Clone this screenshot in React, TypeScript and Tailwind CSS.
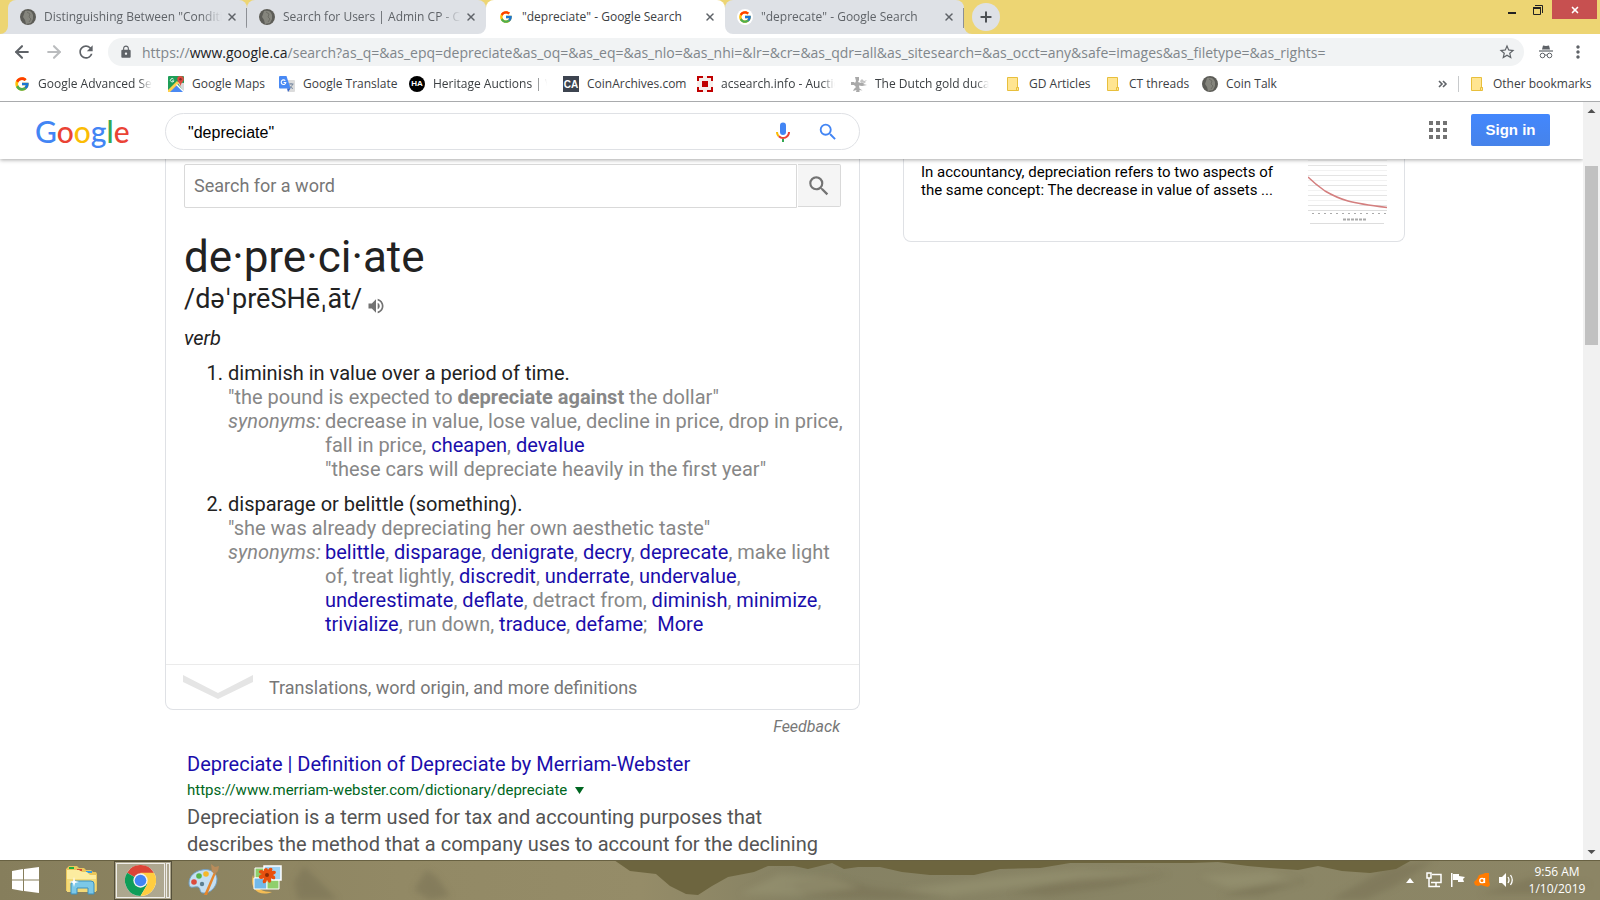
import type { ReactNode } from 'react';
import { ArrowLeft, ArrowRight, Plus, X } from 'lucide-react';
import { FcGoogle } from 'react-icons/fc';
import { MdLock, MdMoreVert, MdOutlineStarBorder, MdRefresh, MdSearch, MdVolumeUp } from 'react-icons/md';

function CoinIcon() {
  return (
    <svg viewBox="0 0 16 16" className="w-4 h-4">
      <circle cx="8" cy="8" r="8" fill="#5c5c57" />
      <path d="M5 2c4-1 7 0 8 4v4l-2 4-5 1-1-4-2-3z" fill="#85857d" />
      <path d="M7 3l3 2-1 3 2 2-2 3" stroke="#6c6c65" strokeWidth="1" fill="none" />
    </svg>
  );
}

function FolderIcon() {
  return (
    <svg viewBox="0 0 16 16" className="w-4 h-4">
      <path d="M2.500 1.500h10v10h1v3h-11z" fill="#ffe591" stroke="#e8bf3c" />
      <path d="M11.500 14.500v-3h2" fill="none" stroke="#e8bf3c" />
    </svg>
  );
}

function MapsIcon() {
  return (
    <svg viewBox="0 0 16 16" className="w-4 h-4">
      <rect width="16" height="16" rx="1" fill="#1e9e58" />
      <path d="M8 8l8 8H1z" fill="#4a89f3" />
      <path d="M9 6l7 1v9z" fill="#dadada" />
      <path d="M0 14L9 5l2 2-9 9H0z" fill="#ffd04c" />
      <path d="M8 9l1-1 7 7v1h-1z" fill="#fff" />
      <path d="M12.500 0a3.300 3.300 0 0 1 3.300 3.300c0 2.500-2.800 3.200-3.300 7.200-.5-4-3.300-4.700-3.300-7.200A3.300 3.300 0 0 1 12.500 0z" fill="#dd4b3e" />
      <circle cx="12.500" cy="3.300" r="1.200" fill="#822f2b" />
      <path d="M5.500 3.200A1.700 1.700 0 1 0 5.800 4.800H4.200" fill="none" stroke="#fff" strokeWidth=".9" />
    </svg>
  );
}

function TranslateIcon() {
  return (
    <svg viewBox="0 0 16 16" className="w-4 h-4">
      <path d="M7 4h8a1 1 0 0 1 1 1v10a1 1 0 0 1-1 1H9z" fill="#dcdcdc" />
      <path d="M9.500 8h5M12 7v1.200M13.600 8c-.4 2-2 3.500-3.600 4.500M10.500 9.500c.8 1.500 2 2.500 3.500 3" fill="none" stroke="#7889a0" />
      <path d="M1 0h6.500l4 12.500H1a1 1 0 0 1-1-1V1a1 1 0 0 1 1-1z" fill="#4889f4" />
      <path d="M8 12.500h3.500L9 16z" fill="#3564c8" />
      <path d="M6.300 4.700A2.300 2.300 0 1 0 6.800 6.500H4.600" fill="none" stroke="#fff" strokeWidth="1.100" />
    </svg>
  );
}

function HeritageIcon() {
  return (
    <span className="w-4 h-4 rounded-full bg-black text-white flex items-center justify-center font-['Liberation_Sans'] font-bold text-[8px]">
      HA
    </span>
  );
}

function CoinArchivesIcon() {
  return (
    <span className="w-4 h-4 bg-[#3d4450] text-white flex items-center justify-center font-['Liberation_Sans'] font-bold text-[10px]">
      CA
    </span>
  );
}

function AcSearchIcon() {
  return (
    <svg viewBox="0 0 16 16" className="w-4 h-4">
      <rect width="16" height="16" fill="#f6efec" />
      <path d="M1 5V1h5M10 1h5v4M15 11v4h-5M6 15H1v-4" fill="none" stroke="#c00000" strokeWidth="2" />
      <rect x="5" y="5" width="6" height="6" fill="#c00000" />
    </svg>
  );
}

function DucatIcon() {
  return (
    <svg viewBox="0 0 16 16" className="w-4 h-4" fill="#a9a9a9">
      <path d="M4 1h4v3l-1 2 3 1 5-1-3 2 4 1-5 1-3-.5.5 3 3 2-3-.5V16H5l.5-2L2 15l1-2 2-2-2-2H0V6h3l1 1 1-2z" />
      <path d="M9 5l2-2 2 2 3-1-2 2-4 1z" fill="#c4c4c4" />
    </svg>
  );
}

const tabs = [
  { title: 'Distinguishing Between "Conditional', icon: 'coin', active: false, divider: true },
  { title: 'Search for Users | Admin CP - Coin T', icon: 'coin', active: false, divider: false },
  { title: '"depreciate" - Google Search', icon: 'google', active: true, divider: false },
  { title: '"deprecate" - Google Search', icon: 'google', active: false, divider: true },
];

const bookmarks: { label: string; icon: ReactNode; width: string; fade?: boolean }[] = [
  { label: 'Google Advanced Search', icon: <FcGoogle className="w-4 h-4" />, width: 'w-[114px]', fade: true },
  { label: 'Google Maps', icon: <MapsIcon />, width: 'w-[71px]' },
  { label: 'Google Translate', icon: <TranslateIcon />, width: 'w-[90px]' },
  { label: 'Heritage Auctions | World', icon: <HeritageIcon />, width: 'w-[114px]', fade: true },
  { label: 'CoinArchives.com', icon: <CoinArchivesIcon />, width: 'w-[94px]' },
  { label: 'acsearch.info - Auction', icon: <AcSearchIcon />, width: 'w-[114px]', fade: true },
  { label: 'The Dutch gold ducats', icon: <DucatIcon />, width: 'w-[114px]', fade: true },
  { label: 'GD Articles', icon: <FolderIcon />, width: 'w-[60px]' },
  { label: 'CT threads', icon: <FolderIcon />, width: 'w-[57px]' },
  { label: 'Coin Talk', icon: <CoinIcon />, width: 'w-[52px]' },
];

const fadeMask = '[mask-image:linear-gradient(to_right,#000_88%,transparent)]';

function Flare({ className }: { className: string }) {
  return (
    <svg viewBox="0 0 8 8" className={`absolute bottom-0 w-2 h-2 ${className}`}>
      <path d="M8 0v8H0a8 8 0 0 0 8-8z" fill="currentColor" />
    </svg>
  );
}

function TabStrip() {
  return (
    <div className="flex justify-between h-[34px] bg-[#edd573] pl-2 pr-[3px]">
      <div className="flex">
        {tabs.map((tab, idx) => (
          <div
            key={idx}
            className={`relative w-[239px] h-full rounded-t-lg flex items-center pl-3 pr-2 ${
              tab.active ? 'bg-white text-white z-10' : 'bg-[#dee1e6] text-[#dee1e6]'
            }`}
          >
            <Flare className="-left-2" />
            <Flare className="-right-2 -scale-x-100" />
            <span className="w-4 h-4 flex items-center justify-center rounded-full bg-white">
              {tab.icon === 'coin' ? <CoinIcon /> : <FcGoogle className="w-[14px] h-[14px]" />}
            </span>
            <button
              className={`ml-2 w-[178px] text-left whitespace-nowrap overflow-hidden text-[12px] ${
                tab.active ? 'text-[#3c4043]' : `text-[#5f6368] ${fadeMask}`
              }`}
            >
              {tab.title}
            </button>
            <button aria-label="Close tab" className="ml-1 text-[#5f6368]">
              <X className="w-3 h-3" strokeWidth={3} />
            </button>
            {tab.divider && <span className="absolute right-0 top-2 w-px h-5 bg-[#8d9095]" />}
          </div>
        ))}
        <button
          aria-label="New tab"
          className="ml-2 mt-[3px] w-7 h-7 rounded-full bg-[#dee1e6] text-[#4c5054] flex items-center justify-center"
        >
          <Plus className="w-4 h-4" strokeWidth={3} />
        </button>
      </div>
      <div className="flex h-[19px]">
        <button aria-label="Minimize" className="w-6 flex items-center justify-center">
          <svg viewBox="0 0 12 12" className="w-3 h-3">
            <path d="M2 8h8v2H2z" fill="#222" />
          </svg>
        </button>
        <button aria-label="Restore" className="w-7 flex items-center justify-center">
          <svg viewBox="0 0 12 12" className="w-3 h-3" fill="none" stroke="#222">
            <path d="M3 1.500h7.500V9" />
            <path d="M1.500 3.500h7v7h-7z" />
            <path d="M1 4h8" strokeWidth="2" />
          </svg>
        </button>
        <button aria-label="Close" className="w-[45px] bg-[#c75050] text-white flex items-center justify-center">
          <X className="w-[10px] h-[10px]" strokeWidth={4} />
        </button>
      </div>
    </div>
  );
}

function Toolbar() {
  return (
    <div className="flex items-center h-9 bg-white pl-3 pr-3 text-[#5f6368]">
      <button aria-label="Back" className="w-8">
        <ArrowLeft className="w-5 h-5" strokeWidth={2.5} />
      </button>
      <button aria-label="Forward" className="w-8 text-[#babcbe]">
        <ArrowRight className="w-5 h-5" strokeWidth={2.5} />
      </button>
      <button aria-label="Reload" className="w-8">
        <MdRefresh className="w-5 h-5" />
      </button>
      <div className="flex-1 flex items-center h-7 rounded-full bg-[#f1f3f4] pl-[11px] pr-2">
        <MdLock className="w-[14px] h-[14px]" />
        <div className="ml-[9px] flex-1 text-[14px] whitespace-nowrap overflow-hidden text-[#80868b]">
          https://<span className="text-[#202124]">www.google.ca</span>
          /search?as_q=&amp;as_epq=depreciate&amp;as_oq=&amp;as_eq=&amp;as_nlo=&amp;as_nhi=&amp;lr=&amp;cr=&amp;as_qdr=all&amp;as_sitesearch=&amp;as_occt=any&amp;safe=images&amp;as_filetype=&amp;as_rights=
        </div>
        <button aria-label="Bookmark this page">
          <MdOutlineStarBorder className="w-[18px] h-[18px]" />
        </button>
      </div>
      <svg viewBox="0 0 16 16" className="w-4 h-4 ml-[14px]">
        <path d="M5 1.500l3 .5 3-.5 1 4H4z" fill="#5f6368" />
        <path d="M1 7h14" stroke="#5f6368" strokeWidth="1.200" />
        <circle cx="4.500" cy="11.500" r="2.300" fill="none" stroke="#5f6368" />
        <circle cx="11.500" cy="11.500" r="2.300" fill="none" stroke="#5f6368" />
        <path d="M6.800 11.300q1.200-.8 2.400 0" fill="none" stroke="#5f6368" />
      </svg>
      <button aria-label="Menu" className="ml-[14px]">
        <MdMoreVert className="w-5 h-5" />
      </button>
    </div>
  );
}

function BookmarksBar() {
  return (
    <div className="flex items-center justify-between h-8 bg-white border-b border-[#a9abad] pl-[14px] pr-[14px] pb-[3px] text-[12px] text-[#3c4043]">
      <div className="flex items-center gap-4">
        {bookmarks.map((item) => (
          <a key={item.label} href="#" className="flex items-center gap-2">
            {item.icon}
            <span className={`whitespace-nowrap ${item.width} ${item.fade ? `overflow-hidden ${fadeMask}` : ''}`}>
              {item.label}
            </span>
          </a>
        ))}
      </div>
      <div className="flex items-center">
        <button aria-label="More bookmarks" className="text-[#5f6368]">
          <svg viewBox="0 0 10 8" className="w-[10px] h-2" fill="none" stroke="currentColor" strokeWidth="1.600">
            <path d="M1 1l3 3-3 3M5 1l3 3-3 3" />
          </svg>
        </button>
        <span className="ml-[10px] w-px h-4 bg-[#c8cacc]" />
        <a href="#" className="ml-[10px] flex items-center gap-2">
          <FolderIcon />
          <span className="whitespace-nowrap w-[93px]">Other bookmarks</span>
        </a>
      </div>
    </div>
  );
}

function GoogleHeader() {
  return (
    <header className="relative z-10 shrink-0 flex items-center h-[57px] bg-white shadow-[0_1px_4px_rgba(0,0,0,0.35)] pl-[35px] pr-[33px]">
      <a href="#" aria-label="Google" className="w-[130px] font-['Lato'] font-medium text-[30px] leading-none">
        <span className="text-[#4285f4]">G</span>
        <span className="text-[#ea4335]">o</span>
        <span className="text-[#fbbc05]">o</span>
        <span className="text-[#4285f4]">g</span>
        <span className="text-[#34a853]">l</span>
        <span className="text-[#ea4335]">e</span>
      </a>
      <form className="mt-[2px] flex items-center w-full max-w-[695px] h-[37px] border border-[#dfe1e5] rounded-full pl-[22px] pr-5">
        <input
          aria-label="Search"
          defaultValue={'"depreciate"'}
          className="flex-1 pt-[2px] font-['Liberation_Sans'] text-[16px] text-black outline-none"
        />
        <button type="button" aria-label="Search by voice">
          <svg viewBox="0 0 24 24" className="w-6 h-6">
            <path d="M12 15a3 3 0 0 0 3-3V5.500a3 3 0 0 0-6 0V12a3 3 0 0 0 3 3z" fill="#4285f4" />
            <path d="M11 18.900h2V22h-2z" fill="#34a853" />
            <path d="M7 12H5c0 2 .8 3.700 2.100 5l1.400-1.400A5 5 0 0 1 7 12z" fill="#fbbc05" />
            <path d="M12 17.100c-1.400 0-2.600-.6-3.500-1.500L7.100 17A7 7 0 0 0 12 19c3.900 0 7-3.100 7-7h-2c0 2.800-2.200 5.100-5 5.100z" fill="#ea4335" />
          </svg>
        </button>
        <button type="button" aria-label="Google Search" className="ml-[22px]">
          <MdSearch className="w-[22px] h-[22px] text-[#4285f4]" />
        </button>
      </form>
      <div className="ml-auto flex items-center pb-px">
        <button aria-label="Google apps">
          <svg viewBox="0 0 18 18" className="w-[18px] h-[18px]" fill="#737373">
            <path d="M0 0h4v4H0zM7 0h4v4H7zM14 0h4v4h-4zM0 7h4v4H0zM7 7h4v4H7zM14 7h4v4h-4zM0 14h4v4H0zM7 14h4v4H7zM14 14h4v4h-4z" />
          </svg>
        </button>
        <a
          href="#"
          className="ml-6 w-[79px] h-8 rounded-xs bg-linear-to-b from-[#4387fd] to-[#4683ea] text-white font-['Liberation_Sans'] font-bold text-[15px] flex items-center justify-center"
        >
          Sign in
        </a>
      </div>
    </header>
  );
}

// Words in `linked` have their own entry, the rest are plain text
function Synonyms({ words, linked, more }: { words: string[]; linked: string[]; more?: boolean }) {
  return (
    <>
      {words.map((word, idx) => (
        <span key={word}>
          {linked.includes(word) ? (
            <a href="#" className="text-[#1a0dab]">
              {word}
            </a>
          ) : (
            word
          )}
          {idx < words.length - 1 && ', '}
        </span>
      ))}
      {more && (
        <>
          ;&nbsp;{' '}
          <a href="#" className="text-[#1a0dab]">
            More
          </a>
        </>
      )}
    </>
  );
}

function DictionaryCard() {
  return (
    <section className="border border-t-0 border-[#dfe1e5] rounded-b-lg">
      <div className="pl-[18px] pr-2 pt-[5px] pb-7 text-[20px] leading-6 text-[#222]">
        <form className="mr-[10px] flex items-start">
          <input
            aria-label="Search for a word"
            placeholder="Search for a word"
            className="flex-1 h-11 border border-[#d9d9d9] rounded-l-xs px-[9px] pb-[2px] text-[18px] placeholder:text-[#777] outline-none"
          />
          <button
            type="button"
            aria-label="Look up"
            className="ml-px w-[43px] h-[43px] bg-[#f5f5f5] border border-l-0 border-[#d9d9d9] rounded-r-xs flex items-center justify-center"
          >
            <MdSearch className="w-[26px] h-[26px] text-[#737373]" />
          </button>
        </form>

        <h2 className="mt-6 text-[44px] leading-[50px]">de·pre·ci·ate</h2>
        <div className="flex items-end">
          <span className="text-[27px] leading-[34px]">
            /də<span className="font-['DejaVu_Sans']">ˈ</span>prēSHē<span className="font-['DejaVu_Sans']">ˌ</span>āt/
          </span>
          <button aria-label="Listen" className="ml-1 text-[#737373]">
            <MdVolumeUp className="w-5 h-5" />
          </button>
        </div>
        <div className="mt-[10px] italic">verb</div>

        <ol className="mt-[11px] list-decimal pl-11">
          <li>
            <div>diminish in value over a period of time.</div>
            <div className="text-[#878787]">
              "the pound is expected to <b>depreciate against</b> the dollar"
            </div>
            <div className="flex text-[#878787]">
              <span className="w-[97px] shrink-0 italic">synonyms:</span>
              <div>
                <Synonyms
                  words={['decrease in value', 'lose value', 'decline in price', 'drop in price', 'fall in price', 'cheapen', 'devalue']}
                  linked={['cheapen', 'devalue']}
                />
                <div>"these cars will depreciate heavily in the first year"</div>
              </div>
            </div>
          </li>
          <li className="mt-[11px]">
            <div>disparage or belittle (something).</div>
            <div className="text-[#878787]">"she was already depreciating her own aesthetic taste"</div>
            <div className="flex text-[#878787]">
              <span className="w-[97px] shrink-0 italic">synonyms:</span>
              <div>
                <Synonyms
                  words={[
                    'belittle', 'disparage', 'denigrate', 'decry', 'deprecate', 'make light of', 'treat lightly',
                    'discredit', 'underrate', 'undervalue', 'underestimate', 'deflate', 'detract from', 'diminish',
                    'minimize', 'trivialize', 'run down', 'traduce', 'defame',
                  ]}
                  linked={[
                    'belittle', 'disparage', 'denigrate', 'decry', 'deprecate', 'discredit', 'underrate', 'undervalue',
                    'underestimate', 'deflate', 'diminish', 'minimize', 'trivialize', 'traduce', 'defame',
                  ]}
                  more
                />
              </div>
            </div>
          </li>
        </ol>
      </div>

      <button className="w-full h-[45px] border-t border-[#ebebeb] pl-[17px] flex items-center text-[18px] text-[#777]">
        <svg viewBox="0 0 70 24" className="w-[70px] h-6">
          <path d="M0 0l35 18L70 0v7L35 24 0 7z" fill="#e5e5e5" />
        </svg>
        <span className="ml-4">Translations, word origin, and more definitions</span>
      </button>
    </section>
  );
}

function SearchResult() {
  return (
    <article className="mt-[15px] ml-[22px] mr-9">
      <h3 className="text-[20px] leading-6">
        <a href="#" className="text-[#1a0dab]">
          Depreciate | Definition of Depreciate by Merriam-Webster
        </a>
      </h3>
      <div className="mt-[2px] flex items-center gap-2 text-[15px] leading-6 text-[#006621]">
        <cite className="not-italic">https://www.merriam-webster.com/dictionary/depreciate</cite>
        <svg viewBox="0 0 9 7" className="w-[9px] h-[7px]">
          <path d="M0 0h9L4.500 7z" fill="#006621" />
        </svg>
      </div>
      <p className="mt-[2px] text-[20px] leading-[27px] text-[#545454]">
        Depreciation is a term used for tax and accounting purposes that describes the method that a company uses to
        account for the declining
      </p>
    </article>
  );
}

function AccountancyCard() {
  return (
    <aside className="w-full max-w-[502px] h-[83px] border border-t-0 border-[#dfe1e5] rounded-b-lg flex justify-between pl-[17px] pr-[17px] overflow-hidden">
      <p className="w-[360px] mt-1 text-[15px] leading-[18px] text-black">
        In accountancy, depreciation refers to two aspects of the same concept: The decrease in value of assets ...
      </p>
      <svg viewBox="0 0 79 66" className="w-[79px] h-[66px] shrink-0">
        <path d="M0 6.500h79M0 16.500h79M0 26.500h79M0 36.500h79M0 46.500h79" stroke="#e4e4e4" />
        <path d="M0 1.500h79M0 11.500h79M0 21.500h79M0 31.500h79M0 41.500h79" stroke="#f2f2f2" />
        <path d="M0 51.500h79" stroke="#ddd" />
        <path d="M0 18Q7 25 17 32q12 7 23 10t39 6.500" fill="none" stroke="#d47f7f" strokeWidth="1.500" />
        <path d="M4 54.500h75" stroke="#aaa" strokeDasharray="2 4" />
        <path d="M35 60.500h24" stroke="#aaa" strokeWidth="2" strokeDasharray="3 1" />
        <path d="M2 64.500h74" stroke="#ddd" />
      </svg>
    </aside>
  );
}

function Scrollbar() {
  return (
    <div className="w-[17px] shrink-0 bg-[#f1f1f1] flex flex-col items-center">
      <svg viewBox="0 0 17 17" className="w-[17px] h-[17px]">
        <path d="M8.500 7l4 4h-8z" fill="#505050" />
      </svg>
      <div className="mt-[47px] w-[13px] h-[179px] bg-[#c1c1c1]" />
      <svg viewBox="0 0 17 17" className="mt-auto w-[17px] h-[17px]">
        <path d="M8.500 11l4-4h-8z" fill="#505050" />
      </svg>
    </div>
  );
}

function TaskbarBackdrop() {
  return (
    <svg viewBox="0 0 1600 40" preserveAspectRatio="none" className="absolute inset-0 w-full h-full">
      <defs>
        <linearGradient id="snow" x1="0" x2="1" y1="0" y2="0">
          <stop offset="0" stopColor="#867e5c" />
          <stop offset="0.25" stopColor="#928965" />
          <stop offset="0.4" stopColor="#958c68" />
          <stop offset="0.5" stopColor="#858163" />
          <stop offset="0.8" stopColor="#8b8666" />
          <stop offset="1" stopColor="#8c8565" />
        </linearGradient>
        <filter id="soft" x="-20%" y="-20%" width="140%" height="140%">
          <feGaussianBlur stdDeviation="3" />
        </filter>
      </defs>
      <rect width="1600" height="40" fill="url(#snow)" />
      <g filter="url(#soft)" fill="#777052" opacity=".5">
        <path d="M298 40l-4-18 10-16 14 14 20 20zM414 30l12-20 10 6 14 20-20 4z" />
        <path d="M1330 40l60-34 45-6-40 26-30 14zM1480 34l50-16 60 6-40 10z" />
        <path d="M790 24l36-8 50 12 70 8-60 4-80-4zM1010 34l70-18 90-2-60 14-60 8zM1220 36l60-18 30 2-50 16z" />
      </g>
      <g filter="url(#soft)" fill="#9a9674" opacity=".5">
        <path d="M740 34l40-20 50 2 30 12-60 8zM900 30l90-12 90-8 80 4-120 10-90 12zM1200 16l70-4 30 10-70 6z" />
      </g>
      <path
        d="M614 0l16 11 26 3 14 12 16 8 12 1 14-9 16-9 26-5 14-6 26 0 14 3 24-6 12 6 14-2 22 0 22 5 28 3 44 0 26-6 40-1 30-5 60 0 60 0 28-1 30 4 22 2 28 2 20-4 24 5 28 2 26-4 16-9z"
        fill="#6d653f"
      />
      <rect width="1600" height="1" fill="#686142" />
    </svg>
  );
}

function Taskbar() {
  return (
    <footer className="relative shrink-0 h-10 bg-[#8c8461]">
      <TaskbarBackdrop />
      <div className="relative h-full flex items-center pl-2 pr-4">
        <button aria-label="Start" className="w-[34px] flex justify-center">
          <svg viewBox="0 0 27 26" className="w-[27px] h-[26px]" fill="#fff">
            <path d="M0 4l11-2v10.500H0zM12 2l15-2v12.500H12zM0 13.500h11V24L0 22zM12 13.500h15V26l-15-2z" />
          </svg>
        </button>
        <button aria-label="File Explorer" className="ml-6">
          <svg viewBox="0 0 32 30" className="w-8 h-[30px]">
            <path d="M1 3l2-2h8l2 2h5l2 2h5l2 2h3l1 2v17H0V4z" fill="#eac75c" />
            <path d="M3 2h5v2H3z" fill="#1fae3d" />
            <path d="M11 4h5v2h-5z" fill="#d54b32" />
            <path d="M20 6h6v2h-6z" fill="#3a9de0" />
            <path d="M1 5h12l3 2h5l3 3h6v17H1z" fill="#fcecA0" />
            <path d="M1 14h29v13H1z" fill="#f2d978" />
            <path d="M5 29V19q0-3 3-3h17q3 0 3 3v10h-6v-6H11v6z" fill="#7cc8e8" stroke="#3c90bd" />
            <path d="M8 12l1 4 4 1-4 1-1 4-1-4-4-1 4-1z" fill="#fff" />
          </svg>
        </button>
        <button
          aria-label="Google Chrome"
          className="ml-4 w-[58px] h-[39px] border border-[#55503a] bg-white/30 flex p-px"
        >
          <span className="flex-1 h-full border border-white/80 flex items-center justify-center">
            <svg viewBox="0 0 32 32" className="w-[31px] h-[31px]">
              <circle cx="16" cy="16" r="16" fill="#fff" />
              <path d="M16 16L2.140 8A16 16 0 0 1 29.860 8z" fill="#db4437" />
              <path d="M16 16L2.140 8A16 16 0 0 0 16 32l7-12z" fill="#0f9d58" />
              <path d="M16 16l7 4-7 12A16 16 0 0 0 29.860 8H16z" fill="#ffcd40" />
              <circle cx="16" cy="16" r="7.400" fill="#f1f1f1" />
              <circle cx="16" cy="16" r="6" fill="#4285f4" />
            </svg>
          </span>
          <span className="ml-px w-1 h-full border border-white/80" />
        </button>
        <button aria-label="Paint" className="ml-4">
          <svg viewBox="0 0 32 32" className="w-8 h-8">
            <path d="M14 6C22 4 29 9 29 15c0 8-7 15-14 14-4-.5-2-5-5-6-4-1-9 3-9-4C1 12 7 7 14 6z" fill="#c5dff2" stroke="#719fc4" />
            <circle cx="6" cy="18" r="2.800" fill="#dc4a3c" />
            <circle cx="11" cy="12" r="2.800" fill="#55b44a" />
            <circle cx="18" cy="10" r="2.800" fill="#f5b829" />
            <circle cx="14" cy="20" r="2.200" fill="#5d7f91" />
            <path d="M26 8l2 1-9 22h-3z" fill="#e5862d" />
            <path d="M23 0l4 3 4-1-1 5-3 3-3-2z" fill="#b98c5b" />
          </svg>
        </button>
        <button aria-label="Photo Gallery" className="ml-[31px]">
          <svg viewBox="0 0 32 30" className="w-8 h-[30px]">
            <path d="M2 10C-2 24 8 32 21 27 12 27 6 24 4 18z" fill="#f4bd55" />
            <path d="M4 3h12v10H4z" fill="#8fcf6c" stroke="#fff" />
            <path d="M3 13h13v11H3z" fill="#72b9ea" stroke="#fff" />
            <path d="M16 14h12v10H16z" fill="#8fcf6c" stroke="#fff" />
            <path d="M13 1h17v14H13z" fill="#9fd3f4" stroke="#fff" strokeWidth="1.500" />
            <path d="M15 3q2 0 2 2 1-3 4-2 1 1 0 3 3-1 4 1 0 2-3 3 3 1 2 4-2 1-4-1 1 3-1 5-2 0-3-3-1 4-4 3-1-2 1-5-3 2-5 0-1-3 3-4-4-1-3-3 2-2 5 0-1-2 2-3z" fill="#e8500e" />
            <circle cx="16" cy="10" r="2" fill="#8c2c05" />
          </svg>
        </button>

        <div className="ml-auto flex items-center text-white">
          <svg viewBox="0 0 8 5" className="w-2 h-[5px]">
            <path d="M4 0l4 5H0z" fill="#fff" />
          </svg>
          <svg viewBox="0 0 16 16" className="ml-3 w-4 h-4" fill="none" stroke="#fff" strokeWidth="1.500">
            <path d="M6 2.500h9v8H5M10 11v3M6 14.500h8M1 1h4v5H1zM3 6v8.500h3" />
          </svg>
          <svg viewBox="0 0 16 16" className="ml-2 w-4 h-4" fill="#fff">
            <path d="M1 1h1.500v14H1zM3 2h6v2l6 1-2 2 1 3H8V8H3z" />
          </svg>
          <svg viewBox="0 0 16 16" className="ml-2 w-4 h-4">
            <path d="M9 2l2-1h4l0 5 0 3 1 4-2 2-4-1-3-1-3 1-3-1-1-3 3-3 2-4z" fill="#ff7b00" />
            <circle cx="8" cy="8.500" r="2.200" fill="none" stroke="#fff" strokeWidth="1.300" />
            <path d="M10.500 6v5" stroke="#fff" strokeWidth="1.300" />
          </svg>
          <svg viewBox="0 0 16 16" className="ml-2 w-4 h-4">
            <path d="M1 5h3l4-4v14l-4-4H1z" fill="#fff" />
            <path d="M10 5q2 3 0 6M12.500 3q3.500 5 0 10" fill="none" stroke="#fff" strokeWidth="1.300" />
          </svg>
          <div className="ml-4 w-[54px] text-center text-[12px] leading-[17px] whitespace-nowrap flex flex-col items-center">
            <span>9:56 AM</span>
            <span>1/10/2019</span>
          </div>
        </div>
      </div>
    </footer>
  );
}

export default function App() {
  return (
    <div className="h-screen flex flex-col overflow-hidden bg-white font-['Open_Sans','Noto_Sans',sans-serif]">
      <TabStrip />
      <Toolbar />
      <BookmarksBar />

      <div className="flex-1 min-h-0 flex">
        <div className="flex-1 min-w-0 flex flex-col overflow-hidden">
          <GoogleHeader />
          <main className="flex-1 min-h-0 overflow-hidden flex items-start pl-[165px] pr-4 font-['Roboto','Noto_Sans',sans-serif]">
            <div className="w-full max-w-[695px]">
              <DictionaryCard />
              <div className="mt-[7px] mr-5 text-right text-[16px] leading-5 italic text-[#777]">
                <a href="#">Feedback</a>
              </div>
              <SearchResult />
            </div>
            <div className="ml-[43px] flex-1">
              <AccountancyCard />
            </div>
          </main>
        </div>
        <Scrollbar />
      </div>

      <Taskbar />
    </div>
  );
}
